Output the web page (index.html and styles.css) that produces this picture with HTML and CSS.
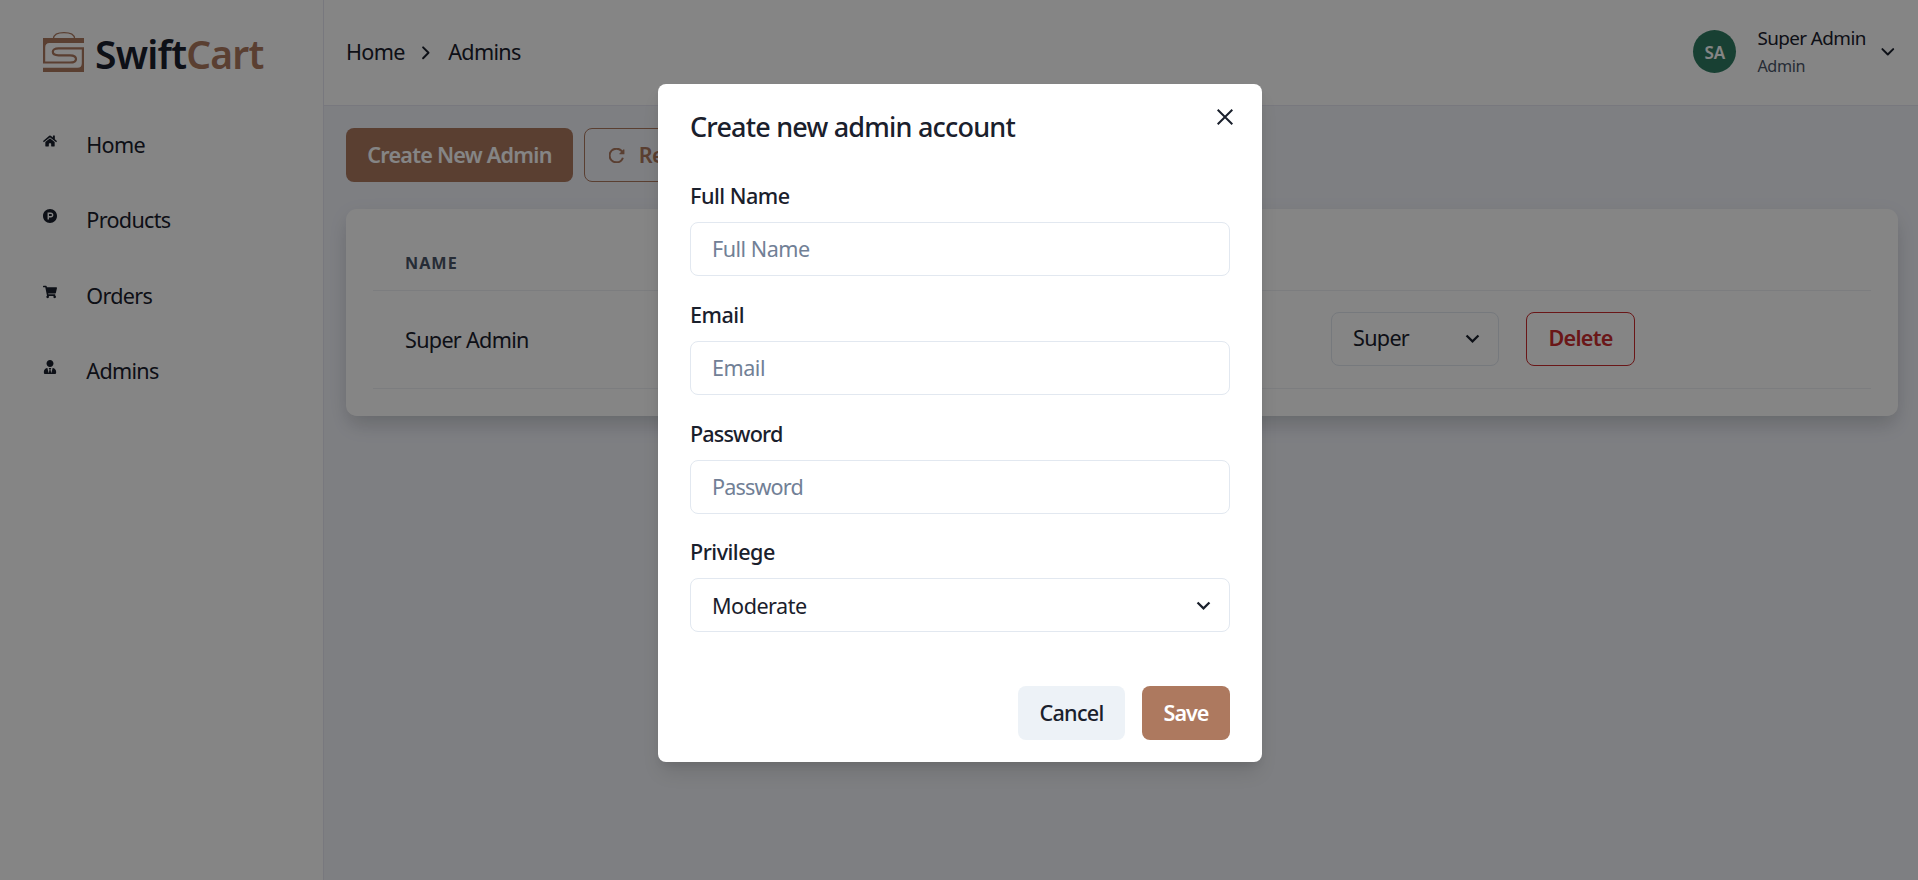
FILE: index.html
```
<!DOCTYPE html>
<html lang="en">
<head>
<meta charset="utf-8">
<title>SwiftCart - Admins</title>
<link rel="stylesheet" href="styles.css">
</head>
<body>
<div class="app">
  <aside class="sidebar">
    <div class="logo">
      <svg class="logo-mark" viewBox="0 0 41 40" fill="none" stroke="#ad795f">
        <path d="M10.4 6.5C10.800 2.800 15 .6 21 .6s10.300 2.200 10.700 5.900" stroke-width="1.2"/>
        <path d="M0 6h41v5H6.500Q2.200 11 2.200 15.500V31H0zM41 40H0v-4.300h34.500q4.300 0 4.300-4.500V16H41z" fill="#ad795f" stroke="none"/>
        <path d="M41 16.300H15.500c-7.600 0-7.600 7 0 7H27c8 0 8 7.200 0 7.200H0" stroke-width="2.2"/>
      </svg>
      <span class="logo-text">Swift<span class="accent">Cart</span></span>
    </div>
    <nav class="menu">
      <a class="menu-item"><svg class="menu-icon" viewBox="0 0 576 512"><path d="M280.370 148.260L96 300.110V464a16 16 0 0 0 16 16l112.060-.290a16 16 0 0 0 15.920-16V368a16 16 0 0 1 16-16h64a16 16 0 0 1 16 16v95.640a16 16 0 0 0 16 16.050L464 480a16 16 0 0 0 16-16V300L295.670 148.260a12.190 12.190 0 0 0-15.300 0zM571.600 251.470L488 182.560V44.050a12 12 0 0 0-12-12h-56a12 12 0 0 0-12 12v72.610L318.470 43a48 48 0 0 0-61 0L4.340 251.470a12 12 0 0 0-1.600 16.900l25.500 31A12 12 0 0 0 45.150 301l235.220-193.740a12.190 12.190 0 0 1 15.300 0L530.900 301a12 12 0 0 0 16.900-1.600l25.500-31a12 12 0 0 0-1.700-16.930z"/></svg><span>Home</span></a>
      <a class="menu-item"><svg class="menu-icon" viewBox="8 8 496 496"><path d="M326.300 218.800c0 20.500-16.700 37.200-37.200 37.200h-70.300v-74.400h70.300c20.500 0 37.200 16.700 37.200 37.200zM504 256c0 137-111 248-248 248S8 393 8 256 119 8 256 8s248 111 248 248zm-128.100-37.200c0-47.900-38.900-86.800-86.800-86.800H169.200v248h49.600v-74.400h70.300c47.900 0 86.800-38.900 86.800-86.800z"/></svg><span>Products</span></a>
      <a class="menu-item"><svg class="menu-icon" viewBox="0 0 576 512"><path d="M528.120 301.319l47.273-208C578.806 78.301 567.391 64 551.990 64H159.208l-9.166-44.810C147.758 8.021 137.930 0 126.529 0H24C10.745 0 0 10.745 0 24v16c0 13.255 10.745 24 24 24h69.883l70.248 343.435C147.325 417.100 136 435.222 136 456c0 30.928 25.072 56 56 56s56-25.072 56-56c0-15.674-6.447-29.835-16.824-40h209.647C430.447 426.165 424 440.326 424 456c0 30.928 25.072 56 56 56s56-25.072 56-56c0-22.172-12.888-41.332-31.579-50.405l5.517-24.276c3.413-15.018-8.002-29.319-23.403-29.319H218.117l-6.545-32h293.145c11.206 0 20.920-7.754 23.403-18.681z"/></svg><span>Orders</span></a>
      <a class="menu-item"><svg class="menu-icon" viewBox="0 0 448 512"><path d="M224 256c70.700 0 128-57.300 128-128S294.700 0 224 0 96 57.300 96 128s57.300 128 128 128zm95.800 32.600L272 480l-32-136 32-56h-96l32 56-32 136-47.800-191.400C56.900 292 0 350.300 0 422.400V464c0 26.500 21.500 48 48 48h352c26.500 0 48-21.500 48-48v-41.600c0-72.100-56.900-130.400-128.200-133.800z"/></svg><span>Admins</span></a>
    </nav>
  </aside>
  <div class="main">
    <header class="header">
      <div class="crumbs">
        <span class="crumb">Home</span>
        <svg class="feather" viewBox="0 0 24 24"><path d="M9 18l6-6-6-6"/></svg>
        <span class="crumb">Admins</span>
      </div>
      <div class="user">
        <div class="avatar">SA</div>
        <div class="user-info">
          <span class="user-name">Super Admin</span>
          <span class="user-role">Admin</span>
        </div>
        <svg class="feather" viewBox="0 0 24 24"><path d="M6 9l6 6 6-6"/></svg>
      </div>
    </header>
    <main class="content">
      <div class="actions">
        <button class="btn btn-primary btn-create">Create New Admin</button>
        <button class="btn btn-outline btn-refresh">
          <svg class="reload" viewBox="32 48 448 416"><path d="M400 148l-21.120-24.570A191.430 191.430 0 00240 64C134 64 48 150 48 256s86 192 192 192a192.090 192.090 0 00181.070-128" fill="none" stroke="currentColor" stroke-width="56"/><path d="M464 97.420V208a16 16 0 01-16 16H337.420c-14.260 0-21.400-17.230-11.320-27.310L436.690 86.100C446.770 76 464 83.160 464 97.420z" fill="currentColor"/></svg>
          <span>Refresh</span>
        </button>
      </div>
      <section class="card">
        <div class="row row-head">Name</div>
        <div class="row row-body">
          <span class="cell-name">Super Admin</span>
          <div class="select select-small"><span>Super</span><svg class="chevron" viewBox="0 0 24 24"><path d="M16.590 8.590L12 13.170 7.410 8.590 6 10l6 6 6-6z"/></svg></div>
          <button class="btn btn-danger">Delete</button>
        </div>
      </section>
    </main>
  </div>
</div>
<div class="overlay">
  <div class="modal">
    <div class="modal-head">
      <h2 class="modal-title">Create new admin account</h2>
      <svg class="close" viewBox="0 0 16 16"><path d="M.7.7l14.600 14.600M15.300.7L.7 15.300"/></svg>
    </div>
    <form class="form">
      <div class="field"><label class="label">Full Name</label><div class="input">Full Name</div></div>
      <div class="field"><label class="label">Email</label><div class="input">Email</div></div>
      <div class="field"><label class="label tight">Password</label><div class="input tight">Password</div></div>
      <div class="field"><label class="label">Privilege</label><div class="select select-form"><span>Moderate</span><svg class="chevron" viewBox="0 0 24 24"><path d="M16.590 8.590L12 13.170 7.410 8.590 6 10l6 6 6-6z"/></svg></div></div>
    </form>
    <div class="modal-foot">
      <button class="btn btn-gray">Cancel</button>
      <button class="btn btn-primary btn-save">Save</button>
    </div>
  </div>
</div>
</body>
</html>
```
FILE: styles.css
```
* { box-sizing: border-box; }

body {
  margin: 0;
  height: 880px;
  overflow: hidden;
  background: #f1f3fa;
  color: #1a202c;
  font-family: "Noto Sans", "Open Sans", sans-serif;
  font-size: 21.6px;
  line-height: 32.4px;
  letter-spacing: -0.7px;
}

.app { display: flex; height: 880px; }

/* Sidebar */
.sidebar {
  flex: none;
  width: 324px;
  background: #fff;
  border-right: 1px solid #e6e7f2;
}
.logo { display: flex; align-items: center; gap: 11px; padding: 32px 0 0 43px; height: 72px; }
.logo-mark { flex: none; width: 41px; height: 40px; }
.logo-text { font-size: 39px; line-height: 40px; font-weight: 600; letter-spacing: -0.8px; padding-top: 3px; }
.accent { color: #ad795f; }
.menu { display: flex; flex-direction: column; gap: 43.2px; padding: 56.500px 0 0 43px; }
.menu-item { display: flex; align-items: flex-start; gap: 29.300px; height: 32.4px; }
.menu-icon { flex: none; width: 14px; height: 14px; margin-top: 5px; fill: #1a202c; }

/* Header */
.main { flex: 1; display: flex; flex-direction: column; min-width: 0; }
.header {
  display: flex;
  align-items: center;
  justify-content: space-between;
  height: 106px;
  padding: 0 19px 2px 22px;
  background: #fff;
  border-bottom: 1px solid #e6e7f2;
}
.crumbs { display: flex; align-items: center; padding-top: 2px; }
.crumbs .feather { margin: 0 12px 0 10px; }
.feather { width: 21.6px; height: 21.6px; fill: none; stroke: #1a202c; stroke-width: 2.2; stroke-linecap: round; stroke-linejoin: round; }
.user { display: flex; align-items: center; }
.avatar {
  display: grid;
  place-items: center;
  width: 43px;
  height: 43px;
  margin-right: 21px;
  border-radius: 50%;
  background: #2f7c62;
  color: #fff;
  font-size: 17px;
  font-weight: 600;
  letter-spacing: 0;
  padding-top: 3px;
}
.user-info { display: flex; flex-direction: column; width: 120px; line-height: 28px; }
.user-name { font-size: 18.9px; letter-spacing: -0.6px; }
.user-role { font-size: 16.2px; letter-spacing: -0.4px; color: #4a5568; }

/* Buttons */
.btn {
  display: flex;
  align-items: center;
  justify-content: center;
  height: 54px;
  padding: 0;
  border: 0;
  border-radius: 8px;
  font: inherit;
  font-weight: 600;
  letter-spacing: -0.75px;
  white-space: nowrap;
}
.btn-primary { background: #ad795f; color: #fff; }
.btn-create { width: 227px; }
.btn-save { width: 88px; letter-spacing: -1px; }
.btn-gray { width: 107px; background: #edf2f7; color: #1a202c; font-weight: 500; }
.btn-outline { border: 1px solid #ad795f; background: none; color: #ad795f; }
.btn-refresh { width: 155px; gap: 14px; }
.btn-danger { width: 109px; border: 1px solid #cc2c2e; background: none; color: #cc2c2e; }
.reload { width: 16px; height: 15px; }

/* Content */
.content { padding: 22px 20px 0 22px; }
.actions { display: flex; gap: 11px; }
.card {
  height: 207px;
  margin-top: 27px;
  padding: 27px;
  background: #fff;
  border-radius: 10.8px;
  box-shadow: 0 13px 20px -4px rgba(0, 20, 20, .12), 0 5px 20px rgba(0, 20, 20, .07);
}
.row { display: flex; align-items: center; border-bottom: 1px solid #edf0f4; padding-left: 32px; }
.row-head { height: 55px; padding-top: 1px; font-size: 16.2px; font-weight: 700; letter-spacing: 1px; text-transform: uppercase; color: #4a5568; }
.row-body { height: 98px; padding-bottom: 2px; }
.cell-name { width: 926px; padding-top: 3px; }
.select {
  display: flex;
  align-items: center;
  justify-content: space-between;
  height: 54px;
  padding: 0 12px 0 21px;
  border: 1px solid #e2e8f0;
  border-radius: 8px;
}
.select-small { width: 168px; margin-right: 27px; }
.select-form { letter-spacing: -0.5px; }
.select-form span { padding-top: 2px; }
.chevron { width: 27px; height: 27px; fill: #1a202c; }

/* Modal */
.overlay {
  position: absolute;
  inset: 0;
  display: flex;
  align-items: flex-start;
  justify-content: center;
  padding: 84px 0 0 2px;
  background: rgba(0, 0, 0, .48);
}
.modal {
  width: 604px;
  height: 678px;
  padding: 0 32px;
  background: #fff;
  border-radius: 8px;
  box-shadow: 0 13px 20px -4px rgba(0, 0, 0, .12), 0 5px 8px -3px rgba(0, 0, 0, .08);
}
.modal-head { display: flex; justify-content: space-between; height: 96px; padding-top: 22px; }
.modal-title { margin: 0; font-size: 27px; line-height: 42px; font-weight: 500; letter-spacing: -0.8px; }
.close { width: 16px; height: 16px; margin: 3px -3px 0 0; fill: none; stroke: #1a202c; stroke-width: 2; }
.form { display: flex; flex-direction: column; gap: 22px; }
.field { height: 96.750px; }
.label { display: block; height: 32.4px; margin: 0 0 9.700px; font-weight: 500; letter-spacing: -0.5px; }
.input { display: flex; align-items: center; height: 54px; padding: 1px 0 0 21px; border: 1px solid #e2e8f0; border-radius: 8px; color: #718096; letter-spacing: -0.5px; }
.label.tight, .input.tight { letter-spacing: -0.85px; }
.modal-foot { display: flex; justify-content: flex-end; gap: 17px; margin-top: 53px; }
```
